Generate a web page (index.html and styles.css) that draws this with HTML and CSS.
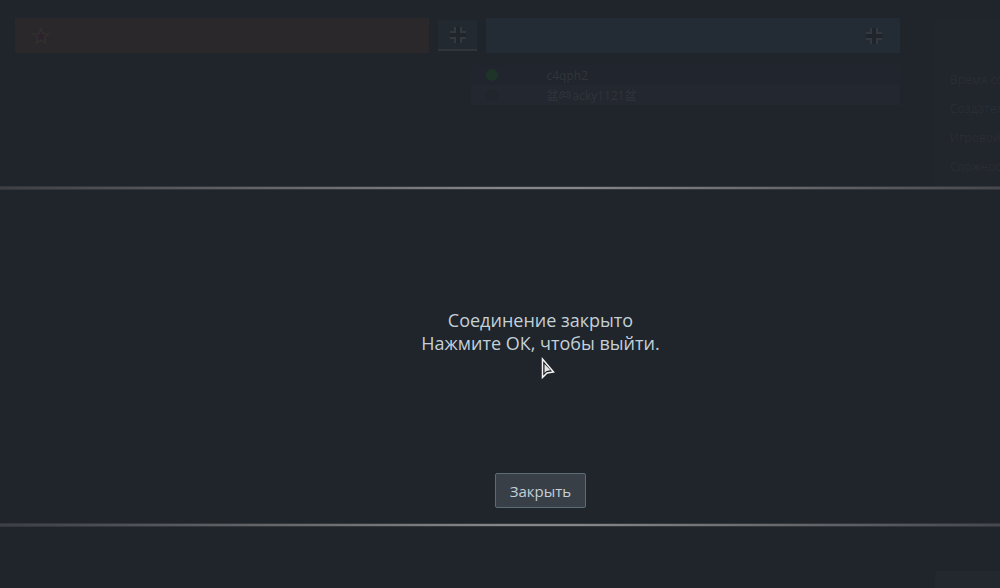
FILE: index.html
```html
<!DOCTYPE html>
<html lang="ru">

<head>
    <meta charset="UTF-8">
    <meta name="viewport" content="width=device-width, initial-scale=1.0">
    <title>Соединение закрыто</title>
    <link rel="stylesheet" href="styles.css">
</head>

<body>
    <div class="lobby">
        <div class="teams">
            <div class="team-bars">
                <div class="team team-red">
                    <svg class="star" viewBox="0 0 18 18" width="18" height="18">
                        <path d="M9 1.5 L11 6.8 L16.8 7 L12.3 10.5 L13.8 16 L9 13 L4.2 16 L5.7 10.5 L1.2 7 L7 6.8 Z" />
                    </svg>
                </div>
                <button class="swap" type="button" aria-label="Наблюдатели">
                    <svg class="collapse" viewBox="0 0 18 18" width="18" height="18">
                        <path class="shade" d="M7 1 H11 V7 H17 V11 H11 V17 H7 V11 H1 V7 H7 Z" />
                        <path d="M1 6 H6 V1 M12 1 V6 H17 M1 12 H6 V17 M12 17 V12 H17" />
                    </svg>
                </button>
                <div class="team team-blue">
                    <svg class="collapse" viewBox="0 0 18 18" width="18" height="18">
                        <path class="shade" d="M7 1 H11 V7 H17 V11 H11 V17 H7 V11 H1 V7 H7 Z" />
                        <path d="M1 6 H6 V1 M12 1 V6 H17 M1 12 H6 V17 M12 17 V12 H17" />
                    </svg>
                </div>
            </div>
            <ul class="players">
                <li class="player"><span class="dot ready"></span><span>c4qph2</span></li>
                <li class="player">
                    <span class="dot"></span>
                    <span class="name">
                        <span>盆</span>
                        <svg class="gamepad" viewBox="0 0 12 10" width="12" height="10">
                            <path d="M3 1.5 L5 2.5 H7 L9 1.5 L10.5 2.5 L11.3 8 L10 8.7 L8 6.5 H4 L2 8.7 L0.7 8 L1.5 2.5 Z M3 4.5 H5 M4 3.5 V5.5 M7.5 4.5 H9" />
                        </svg>
                        <span>acky1121盆</span>
                    </span>
                </li>
            </ul>
        </div>
        <div class="side">
            <div class="info">
                <p>Время создания</p>
                <p>Создатель</p>
                <p>Игровой режим</p>
                <p>Сложность</p>
            </div>
            <div class="side-box"></div>
        </div>
    </div>

    <div class="dialog" role="dialog" aria-labelledby="message">
        <div class="line"></div>
        <div class="dialog-body">
            <p class="message" id="message">Соединение закрыто<br>Нажмите ОК, чтобы выйти.</p>
            <button class="close" type="button">Закрыть</button>
        </div>
        <div class="line"></div>
    </div>

    <svg class="cursor" viewBox="0 0 16 24" width="16" height="24">
        <path class="cursor-edge" d="M2.5 3 V21.5 L7 17 L13.5 16 Z" />
        <path class="cursor-fill" d="M4.5 8 V17 L6.5 15 L10.5 14.3 Z" />
    </svg>
</body>

</html>
```
FILE: styles.css
```css
* {
    box-sizing: border-box;
}

body {
    margin: 0;
    height: 100vh;
    overflow: hidden;
    position: relative;
    background-color: #20242b;
    color: #c3d0d8;
    font-family: "Open Sans", "Noto Sans", "Noto Sans CJK SC", sans-serif;
}

p,
ul {
    margin: 0;
    padding: 0;
}

.lobby {
    display: flex;
    gap: 35px;
    height: 100%;
    padding: 18px 0 0 15px;
}

.teams {
    flex: 1;
}

.team-bars {
    display: flex;
    align-items: center;
    gap: 9px;
}

.team {
    display: flex;
    align-items: center;
    flex: 1;
    height: 35px;
    padding: 0 17px;
}

.team-red {
    background-color: #2b282c;
}

.team-blue {
    justify-content: flex-end;
    background-color: #232b34;
}

.star {
    fill: #2d222d;
    stroke: #30302c;
    stroke-width: 1.5;
}

.collapse {
    fill: none;
    stroke: #343940;
    stroke-width: 2;
}

.shade {
    fill: #20252c;
    stroke: none;
}

.swap {
    display: flex;
    align-items: center;
    justify-content: center;
    width: 39px;
    height: 31px;
    padding: 0;
    border: none;
    border-bottom: 2px solid #30343b;
    background-color: #232931;
}

.players {
    margin: 12px 0 0 calc(50% + 13px);
    list-style: none;
}

.player {
    display: flex;
    align-items: center;
    gap: 49px;
    height: 20px;
    padding-left: 15px;
    background-color: #21252d;
    color: #30353c;
    font-size: 12px;
}

.player:last-child {
    background-color: #23272f;
}

.name {
    display: flex;
    align-items: center;
}

.gamepad {
    margin-right: 2px;
    fill: none;
    stroke: #30353c;
}

.dot {
    width: 12px;
    height: 12px;
    border-radius: 50%;
    background-color: #21252c;
}

.ready {
    background-color: #1f3429;
}

.side {
    display: flex;
    flex-direction: column;
    justify-content: space-between;
    width: 65px;
    overflow: hidden;
}

.info {
    height: 168px;
    padding: 47px 0 0 15px;
    background-color: #21252c;
    color: #292d34;
    font-size: 12px;
    line-height: 29px;
    white-space: nowrap;
}

.side-box {
    height: 17px;
    border-radius: 3px 0 0 0;
    background-color: #23272e;
}

.dialog {
    position: absolute;
    top: 186px;
    left: 0;
    right: 0;
    background-color: #20242b;
}

.line {
    height: 4px;
    border: 1px solid #34383d;
    border-width: 1px 0;
    background: linear-gradient(to right, #3c4044, #85868a 50%, #85868a 58%, #45494d);
}

.dialog-body {
    display: flex;
    flex-direction: column;
    align-items: center;
    gap: 118px;
    padding: 119px 0 15px 81px;
}

.message {
    font-size: 18px;
    line-height: 23px;
    text-align: center;
}

.close {
    height: 35px;
    padding: 0 14px;
    border: 1px solid #5b6c74;
    border-radius: 2px;
    background-color: #383f47;
    color: #c3d0d8;
    font-family: inherit;
    font-size: 15px;
}

.cursor {
    position: absolute;
    top: 356px;
    left: 540px;
}

.cursor-edge {
    fill: #15181d;
    stroke: #f4f4f4;
    stroke-width: 1.5;
}

.cursor-fill {
    fill: #e4e4e4;
}
```
